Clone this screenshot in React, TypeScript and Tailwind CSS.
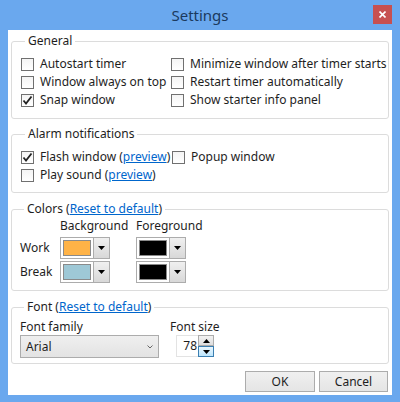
import React from 'react';

const font = { fontFamily: '"Noto Sans", "Open Sans", sans-serif' };

function Check({ checked, label }: { checked?: boolean; label: React.ReactNode }) {
    return (
        <div className="flex items-center h-[18px] whitespace-nowrap">
            <span className="w-[13px] h-[13px] border border-[#707070] bg-gradient-to-b from-[#f4f4f4] to-white flex items-center justify-center shrink-0">
                {checked && (
                    <svg width="11" height="11" viewBox="0 0 11 11">
                        <path d="M1.5 5.5 L4 8.5 L9.5 1.5" stroke="#222" strokeWidth="1.8" fill="none" />
                    </svg>
                )}
            </span>
            <span className="ml-[6px]">{label}</span>
        </div>
    );
}

function Group({ title, children, className }: { title: React.ReactNode; children: React.ReactNode; className?: string }) {
    return (
        <fieldset className={`border border-[#dcdcdc] rounded-[3px] ${className ?? ''}`}>
            <legend className="ml-[4px] px-[3px] leading-[16px]">{title}</legend>
            {children}
        </fieldset>
    );
}

function Link({ children }: { children: React.ReactNode }) {
    return <span className="text-[#0066cc] underline">{children}</span>;
}

function ColorPick({ color }: { color: string }) {
    return (
        <div className="flex w-[50px] h-[22px] border border-[#acacac] bg-white">
            <div className="flex-1 p-[2px]">
                <div className="w-full h-full border border-[#8a8a8a]" style={{ background: color }} />
            </div>
            <div className="w-[16px] border-l border-[#acacac] bg-gradient-to-b from-[#f0f0f0] to-[#d8d8d8] flex items-center justify-center">
                <svg width="7" height="4" viewBox="0 0 7 4"><path d="M0 0 H7 L3.5 4 Z" fill="#000" /></svg>
            </div>
        </div>
    );
}

export default function App() {
    return (
        <div className="w-[400px] h-[402px] bg-[#6aa8ee] flex flex-col text-[12px] text-[#1e1e1e]" style={font}>
            <div className="h-[30px] relative flex items-center justify-center">
                <span className="text-[15px] text-[#1b3a5e]">Settings</span>
                <div className="absolute left-[373px] top-[5px] w-[19px] h-[19px] bg-[#c75050] flex items-center justify-center">
                    <svg width="7" height="7" viewBox="0 0 7 7"><path d="M0.5 0.5 L6.5 6.5 M6.5 0.5 L0.5 6.5" stroke="#fff" strokeWidth="1.6" /></svg>
                </div>
            </div>
            <div className="mx-[8px] h-[365px] bg-white px-[3px] pt-[3px] flex flex-col">
                <Group title="General" className="pl-[9px] pb-[9px]">
                    <div className="grid grid-cols-[150px_1fr] mt-[6px]">
                        <Check label="Autostart timer" />
                        <Check label="Minimize window after timer starts" />
                        <Check label="Window always on top" />
                        <Check label="Restart timer automatically" />
                        <Check checked label="Snap window" />
                        <Check label="Show starter info panel" />
                    </div>
                </Group>
                <Group title="Alarm notifications" className="mt-[7px] pl-[9px] pb-[8px]">
                    <div className="grid grid-cols-[151px_1fr] mt-[6px]">
                        <Check checked label={<>Flash window (<Link>preview</Link>)</>} />
                        <Check label="Popup window" />
                        <Check label={<>Play sound (<Link>preview</Link>)</>} />
                    </div>
                </Group>
                <Group title={<>Colors (<Link>Reset to default</Link>)</>} className="mt-[8px] pl-[8px] pb-[7px]">
                    <div className="grid grid-cols-[40px_76px_1fr] items-center gap-y-[2px] mt-[1px]">
                        <span />
                        <span className="h-[17px] leading-[16px]">Background</span>
                        <span className="h-[17px] leading-[16px]">Foreground</span>
                        <span>Work</span>
                        <ColorPick color="#ffb347" />
                        <ColorPick color="#000000" />
                        <span>Break</span>
                        <ColorPick color="#9ec8d6" />
                        <ColorPick color="#000000" />
                    </div>
                </Group>
                <Group title={<>Font (<Link>Reset to default</Link>)</>} className="mt-[8px] pl-[8px] pb-[5px]">
                    <div className="flex mt-[4px]">
                        <div className="flex flex-col w-[150px]">
                            <span className="leading-[16px]">Font family</span>
                            <div className="w-[139px] h-[23px] border border-[#acacac] bg-gradient-to-b from-[#efefef] to-[#e3e3e3] flex items-center px-[5px]">
                                <span className="flex-1">Arial</span>
                                <svg width="6" height="4" viewBox="0 0 6 4"><path d="M0.5 0.5 L3 3 L5.5 0.5" stroke="#666" fill="none" /></svg>
                            </div>
                        </div>
                        <div className="flex flex-col">
                            <span className="leading-[16px]">Font size</span>
                            <div className="flex ml-[6px] h-[22px]">
                                <div className="w-[22px] border border-[#e3e3e3] border-r-0 flex items-center justify-end pr-[1px] bg-white">78</div>
                                <div className="flex flex-col w-[16px]">
                                    <div className="flex-1 border border-[#acacac] bg-gradient-to-b from-[#f2f2f2] to-[#dedede] flex items-center justify-center">
                                        <svg width="7" height="4" viewBox="0 0 7 4"><path d="M0 4 H7 L3.5 0 Z" fill="#000" /></svg>
                                    </div>
                                    <div className="flex-1 border border-[#3c7fb1] bg-gradient-to-b from-[#eaf6fd] to-[#bee6fd] flex items-center justify-center">
                                        <svg width="7" height="4" viewBox="0 0 7 4"><path d="M0 0 H7 L3.5 4 Z" fill="#000" /></svg>
                                    </div>
                                </div>
                            </div>
                        </div>
                    </div>
                </Group>
                <div className="flex justify-end gap-[4px] mt-[7px] pr-[1px]">
                    <div className="w-[70px] h-[21px] border border-[#acacac] bg-gradient-to-b from-[#f0f0f0] to-[#e5e5e5] flex items-center justify-center">OK</div>
                    <div className="w-[69px] h-[21px] border border-[#acacac] bg-gradient-to-b from-[#f0f0f0] to-[#e5e5e5] flex items-center justify-center">Cancel</div>
                </div>
            </div>
        </div>
    );
}
